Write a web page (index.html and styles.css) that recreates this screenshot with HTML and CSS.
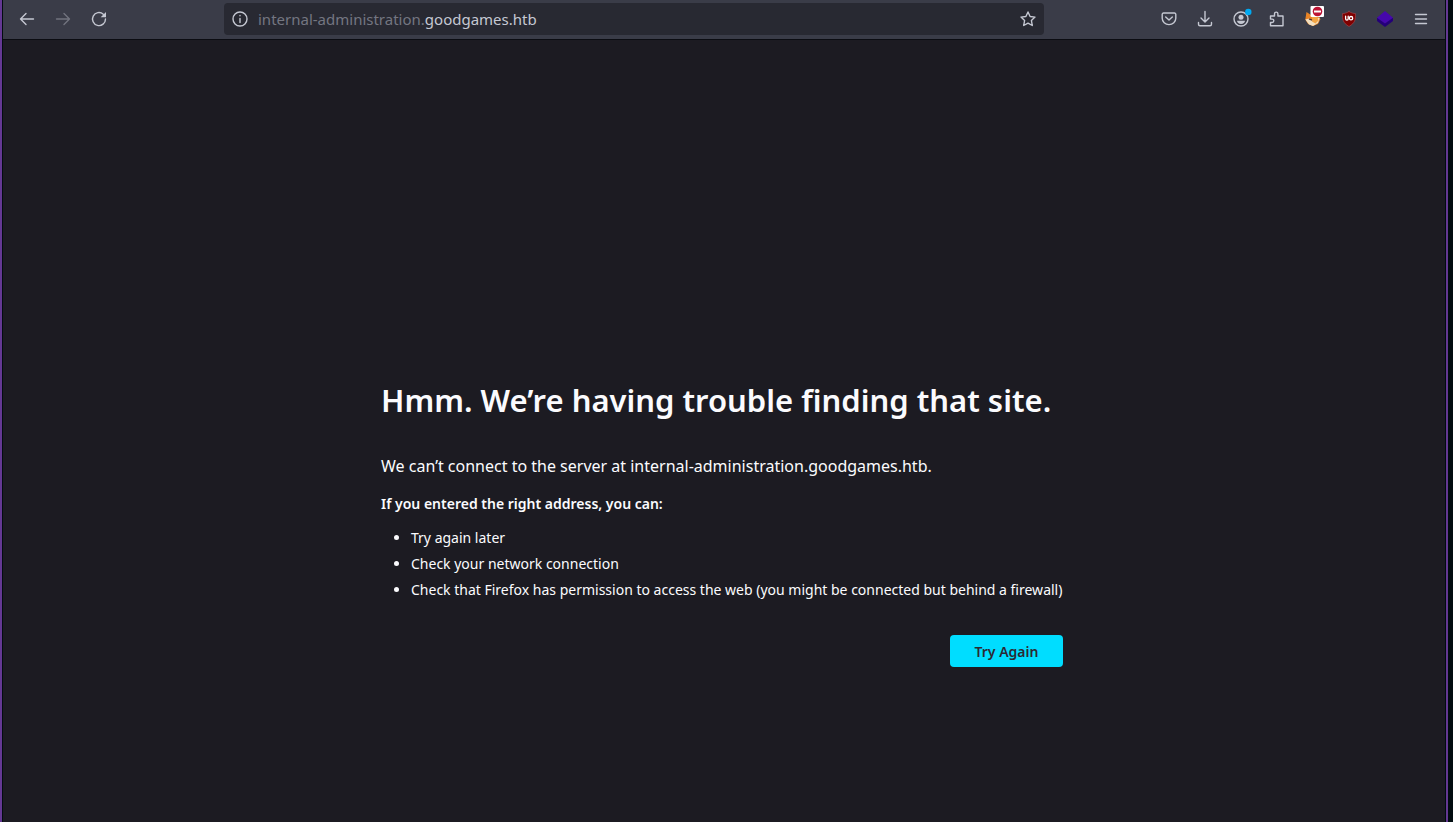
FILE: index.html
```html
<!DOCTYPE html>
<html lang="en">
<head>
<meta charset="utf-8">
<title>Server Not Found</title>
<link rel="stylesheet" href="styles.css">
</head>
<body>
<div class="window">
  <header class="toolbar">
    <nav class="nav-buttons" aria-label="Navigation">
      <button class="tool" aria-label="Back"><svg viewBox="0 0 16 16"><path d="M14.500 8H1.500M7 2.500L1.500 8 7 13.500"/></svg></button>
      <button class="tool" aria-label="Forward" disabled><svg viewBox="0 0 16 16"><path d="M1.500 8h13M9 2.500L14.500 8 9 13.500"/></svg></button>
      <button class="tool" aria-label="Reload"><svg viewBox="0 0 16 16"><path d="M14.500 8A6.500 6.500 0 1 1 12.300 3.200"/><path class="solid" d="M15 1v5.300H9.700z"/></svg></button>
    </nav>
    <div class="address">
      <button class="site-info" aria-label="Site information"><svg viewBox="0 0 16 16"><circle cx="8" cy="8" r="7"/><path d="M8 7.500v4M8 4.500v.3"/></svg></button>
      <span class="url">internal-administration.<span class="domain">goodgames.htb</span></span>
      <button class="bookmark" aria-label="Bookmark this page"><svg viewBox="0 0 16 16"><path d="M8 1l2.100 4.500 4.900.6-3.600 3.400.9 5L8 12.100l-4.300 2.400.9-5L1 6.100l4.900-.6z"/></svg></button>
    </div>
    <div class="actions">
      <button class="tool" aria-label="Save to Pocket"><svg viewBox="0 0 16 16"><path d="M2.500 2h11a1.300 1.300 0 0 1 1.300 1.300v4A6.800 6.300 0 0 1 1.200 7.300v-4A1.300 1.300 0 0 1 2.500 2zM4.700 6L8 9l3.300-3"/></svg></button>
      <button class="tool" aria-label="Downloads"><svg viewBox="0 0 16 16"><path d="M8 .5v10M4 7l4 4 4-4M1.500 11.500v1.800a1.500 1.500 0 0 0 1.500 1.500h10a1.500 1.500 0 0 0 1.500-1.500v-1.800"/></svg></button>
      <button class="tool" aria-label="Account"><svg viewBox="0 0 16 16"><circle cx="8" cy="8" r="7"/><circle class="solid" cx="8" cy="6.200" r="2.500"/><path class="solid" d="M4 9.800h8c0 2-1.800 3.200-4 3.200s-4-1.200-4-3.200z"/><circle class="notice" cx="15.300" cy="1" r="3.200"/></svg></button>
      <button class="tool" aria-label="Extensions"><svg viewBox="0 0 16 16"><path d="M1.500 5h4V2.800a1.700 1.700 0 0 1 3.400 0V5H14v9.700H1.500v-3.200h1.600a1.700 1.700 0 0 0 0-3.400H1.500z"/></svg></button>
      <button class="tool" aria-label="FoxyProxy"><svg viewBox="0 0 16 16"><path fill="#e98324" stroke="none" d="M1.500 1L6 4l7 1 2.500 3-2.500 5-5 2-5-2-2.700-4.500z"/><path fill="#f3dfc0" stroke="none" d="M.3 8.500l4-1 3 2.500 5-3 2.500-.5-1.800 5.500L8 15l-4-1.500z"/><path fill="#f3a544" stroke="none" d="M7 6l5-1 1.500 4.500-3 3-3.500-2z"/><path stroke="#4b3028" d="M4.500 8.200l2 .6"/><rect x="5.500" y="-5" width="13.500" height="11" rx="1" fill="#fff" stroke="none"/><circle cx="12.500" cy=".5" r="4.800" fill="#bd1435" stroke="none"/><path stroke="#fff" stroke-width="2" stroke-linecap="butt" d="M9 .5h7"/></svg></button>
      <button class="tool" aria-label="uBlock Origin"><svg viewBox="0 0 16 16"><path fill="#800000" stroke="#a64b50" stroke-width=".6" d="M8 .5c2 1.500 4.500 2 6.500 2 .3 6-.5 9.500-6.500 13-6-3.500-6.800-7-6.500-13 2 0 4.500-.5 6.500-2z"/><path stroke="#fff" stroke-width="1.300" d="M4.600 5.200v2.600a1.300 1.300 0 0 0 2.600 0V5.200"/><circle cx="10" cy="7.200" r="1.700" stroke="#fff" stroke-width="1.300"/></svg></button>
      <button class="tool" aria-label="Wappalyzer"><svg viewBox="0 0 16 16"><path fill="#240078" stroke="none" d="M0 7h16v3L8 16 0 10z"/><path fill="#4608ad" stroke="none" d="M8 0l8 6.700-8 5.800-8-5.800z"/></svg></button>
      <button class="tool" aria-label="Application menu"><svg viewBox="0 0 16 16"><path d="M2.500 3.500h11M2.500 8h11M2.500 12.500h11"/></svg></button>
    </div>
  </header>
  <main class="page">
    <section class="error">
      <h1>Hmm. We’re having trouble finding that site.</h1>
      <p class="summary">We can’t connect to the server at internal-administration.goodgames.htb.</p>
      <p class="hint">If you entered the right address, you can:</p>
      <ul>
        <li>Try again later</li>
        <li>Check your network connection</li>
        <li>Check that Firefox has permission to access the web (you might be connected but behind a firewall)</li>
      </ul>
      <div class="buttons"><button class="retry">Try Again</button></div>
    </section>
  </main>
</div>
</body>
</html>
```
FILE: styles.css
```css
* { box-sizing: border-box; }
body {
  margin: 0;
  padding-right: 5px;
  background: #020c10;
  color: #fbfbfe;
  font-family: "Noto Sans", sans-serif;
  font-size: 14px;
}
.window {
  display: flex;
  flex-direction: column;
  min-height: 100vh;
  border: solid #643893;
  border-width: 0 2px;
}
.toolbar {
  display: flex;
  align-items: center;
  height: 40px;
  padding: 0 6px 1px;
  margin: 0 1px;
  background: #3a3c48;
  border-bottom: 1px solid #0b0c12;
}
button {
  margin: 0;
  padding: 0;
  border: 0;
  background: none;
  color: inherit;
  font: inherit;
}
svg {
  display: block;
  width: 16px;
  height: 16px;
  overflow: visible;
  fill: none;
  stroke: currentColor;
  stroke-width: 1.4;
  stroke-linecap: round;
  stroke-linejoin: round;
}
.solid { fill: currentColor; stroke: none; }
.notice { fill: #00aaf2; stroke: none; }
.tool {
  display: grid;
  place-items: center;
  width: 36px;
  height: 36px;
  color: #c5c8d2;
}
.tool:disabled { color: #71737e; }
.nav-buttons { display: flex; margin-right: 107px; }
.actions { display: flex; margin-left: auto; }
.address {
  display: flex;
  align-items: center;
  flex: 0 1 820px;
  height: 32px;
  padding: 0 8px;
  border-radius: 4px;
  background: #282932;
  color: #c5c8d2;
}
.url {
  flex: 1;
  padding-left: 10px;
  color: #747681;
  font-size: 15px;
  white-space: nowrap;
}
.domain { color: #c5c8d2; }
.page {
  display: flex;
  flex: 1;
  flex-direction: column;
  align-items: center;
  margin: 0 1px;
  padding: 336px 48px 48px;
  background: #1c1b22;
}
.error { width: 100%; max-width: 686px; }
h1 {
  margin: 0;
  font-size: 31px;
  font-weight: 600;
  line-height: 48px;
}
.summary { margin: 29px 0 0; font-size: 16px; line-height: 26px; }
.hint { margin: 12px 0 0; font-weight: 600; line-height: 26px; }
ul { margin: 8px 0 0; padding-left: 30px; line-height: 26px; }
.buttons { display: flex; justify-content: flex-end; margin: 32px 4px 0; }
.retry {
  min-width: 113px;
  height: 32px;
  padding: 0 20px;
  border-radius: 4px;
  background: #00ddff;
  color: #2b2a33;
  font-weight: 600;
}
```
